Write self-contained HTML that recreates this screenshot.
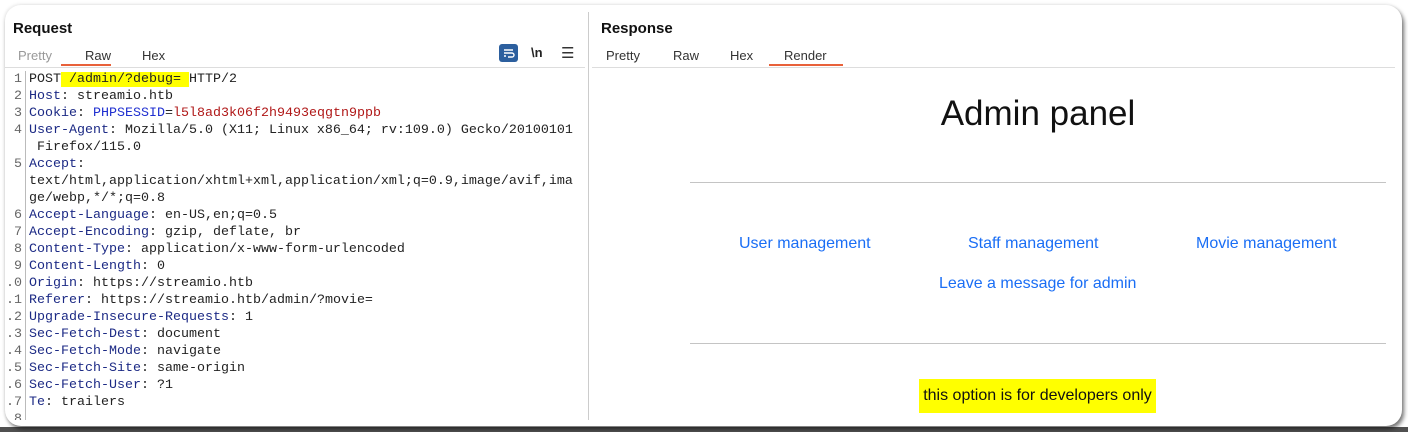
<!DOCTYPE html>
<html><head><meta charset="utf-8"><style>
html,body{margin:0;padding:0;width:1408px;height:432px;overflow:hidden;background:#fff;position:relative;font-family:"Liberation Sans",sans-serif}
.bot{position:absolute;left:0;top:427px;width:1408px;height:5px;background:#505050}
.card{position:absolute;left:5px;top:5px;width:1397px;height:421px;background:#fff;border-radius:16px;box-shadow:2px 3px 4px rgba(0,0,0,.55), -1px -1px 3px rgba(0,0,0,.08)}
.abs{position:absolute}
.title{font-weight:bold;font-size:15px;color:#111}
.tab{font-size:13px;color:#333;top:48px}
.ul{height:2px;background:#e8613a;top:64px}
.hl{height:1px;background:#ddd}
.code{position:absolute;left:0;top:71px;font-family:"Liberation Mono",monospace;font-size:13.33px;line-height:17px;color:#222}
.r{display:flex}
.n{width:22px;text-align:right;color:#666;padding-right:3px;border-right:1px solid #bbb;margin-right:3px}
.k{color:#1c2a85}
.v{color:#b01818}
.lk{color:#1a6ef5;font-size:16px;top:235px}
</style></head><body>
<div class="bot"></div>
<div class="card"></div>
<div class="abs title" style="left:13px;top:20px">Request</div>
<div class="abs tab" style="left:18px;color:#999">Pretty</div>
<div class="abs tab" style="left:85px">Raw</div>
<div class="abs tab" style="left:142px">Hex</div>
<div class="abs ul" style="left:61px;width:50px"></div>
<div class="abs" style="left:499px;top:44px;width:19px;height:18px;background:#2c5f9e;border-radius:3px"><svg width="19" height="18"><path d="M5 6h9M5 9h8a2 2 0 0 1 0 4h-4M5 12h2" stroke="#fff" stroke-width="1.4" fill="none"/></svg></div>
<div class="abs" style="left:531px;top:45px;font-size:13px;color:#222;font-weight:bold">\n</div>
<div class="abs" style="left:561px;top:44px;font-size:15px;color:#333">☰</div>
<div class="abs hl" style="left:5px;top:67px;width:580px"></div>
<div class="abs" style="left:588px;top:12px;width:1px;height:408px;background:#ccc"></div>
<div class="code">
<div class="r"><span class="n">1</span><span>POST<span style="background:#ffff00">&nbsp;/admin/?debug=&nbsp;</span>HTTP/2</span></div>
<div class="r"><span class="n">2</span><span><span class="k">Host</span>: streamio.htb</span></div>
<div class="r"><span class="n">3</span><span><span class="k">Cookie</span>: <span style="color:#1f2fd0">PHPSESSID</span>=<span class="v">l5l8ad3k06f2h9493eqgtn9ppb</span></span></div>
<div class="r"><span class="n">4</span><span><span class="k">User-Agent</span>: Mozilla/5.0 (X11; Linux x86_64; rv:109.0) Gecko/20100101<br>&nbsp;Firefox/115.0</span></div>
<div class="r"><span class="n">5</span><span><span class="k">Accept</span>:<br>text/html,application/xhtml+xml,application/xml;q=0.9,image/avif,ima<br>ge/webp,*/*;q=0.8</span></div>
<div class="r"><span class="n">6</span><span><span class="k">Accept-Language</span>: en-US,en;q=0.5</span></div>
<div class="r"><span class="n">7</span><span><span class="k">Accept-Encoding</span>: gzip, deflate, br</span></div>
<div class="r"><span class="n">8</span><span><span class="k">Content-Type</span>: application/x-www-form-urlencoded</span></div>
<div class="r"><span class="n">9</span><span><span class="k">Content-Length</span>: 0</span></div>
<div class="r"><span class="n">.0</span><span><span class="k">Origin</span>: https://streamio.htb</span></div>
<div class="r"><span class="n">.1</span><span><span class="k">Referer</span>: https://streamio.htb/admin/?movie=</span></div>
<div class="r"><span class="n">.2</span><span><span class="k">Upgrade-Insecure-Requests</span>: 1</span></div>
<div class="r"><span class="n">.3</span><span><span class="k">Sec-Fetch-Dest</span>: document</span></div>
<div class="r"><span class="n">.4</span><span><span class="k">Sec-Fetch-Mode</span>: navigate</span></div>
<div class="r"><span class="n">.5</span><span><span class="k">Sec-Fetch-Site</span>: same-origin</span></div>
<div class="r"><span class="n">.6</span><span><span class="k">Sec-Fetch-User</span>: ?1</span></div>
<div class="r"><span class="n">.7</span><span><span class="k">Te</span>: trailers</span></div>
<div class="r" style="height:9px;overflow:hidden"><span class="n">8</span><span></span></div>
</div>
<div class="abs title" style="left:601px;top:20px">Response</div>
<div class="abs tab" style="left:606px">Pretty</div>
<div class="abs tab" style="left:673px">Raw</div>
<div class="abs tab" style="left:730px">Hex</div>
<div class="abs tab" style="left:784px">Render</div>
<div class="abs ul" style="left:769px;width:74px"></div>
<div class="abs hl" style="left:592px;top:67px;width:803px"></div>
<div class="abs" style="left:690px;top:94px;width:696px;text-align:center;font-size:35px;color:#111">Admin panel</div>
<div class="abs" style="left:690px;top:182px;width:696px;height:1px;background:#c4c4c4"></div>
<div class="abs lk" style="left:739px">User management</div>
<div class="abs lk" style="left:968px">Staff management</div>
<div class="abs lk" style="left:1196px">Movie management</div>
<div class="abs lk" style="left:939px;top:275px">Leave a message for admin</div>
<div class="abs" style="left:690px;top:343px;width:696px;height:1px;background:#c4c4c4"></div>
<div class="abs" style="left:919px;top:379px;width:237px;height:34px;background:#ffff00;font-size:16px;color:#111;line-height:34px;text-align:center">this option is for developers only</div>
</body></html>
